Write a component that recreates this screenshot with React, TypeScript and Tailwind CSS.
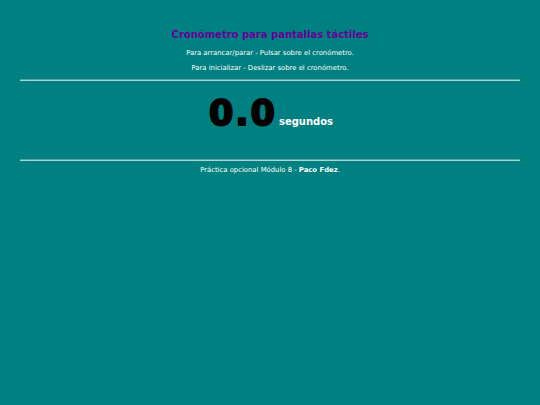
export default function App() {
  return (
    <div className="min-h-[405px] w-full bg-[#008080] text-white" style={{ fontFamily: '"DejaVu Sans", Verdana, sans-serif' }}>
      <div className="pt-[28px] text-center">
        <h1 className="text-[10px] font-bold leading-[14px] text-[#660099]">Cronómetro para pantallas táctiles</h1>
        <p className="mt-[7px] text-[6.85px] leading-[9px]">Para arrancar/parar - Pulsar sobre el cronómetro.</p>
        <p className="mt-[6px] text-[6.85px] leading-[9px]">Para inicializar - Deslizar sobre el cronómetro.</p>
      </div>
      <div className="mx-5 mt-[6px] h-[2px] border-t border-t-[#5a9e9a] border-b border-b-[#a8d8d4]" />
      <div className="flex items-baseline justify-center pt-[12px] pl-[2px]">
        <span className="text-[35px] font-black leading-[40px] text-black tracking-[2px] [-webkit-text-stroke:2px_black]">0.0</span>
        <span className="ml-[2px] text-[10px] font-bold leading-[12px]">segundos</span>
      </div>
      <div className="mx-5 mt-[26px] h-[2px] border-t border-t-[#5a9e9a] border-b border-b-[#a8d8d4]" />
      <p className="mt-[5px] text-center text-[6.85px] leading-[9px]">
        Práctica opcional Módulo 8 - <b>Paco Fdez</b>.
      </p>
    </div>
  );
}
